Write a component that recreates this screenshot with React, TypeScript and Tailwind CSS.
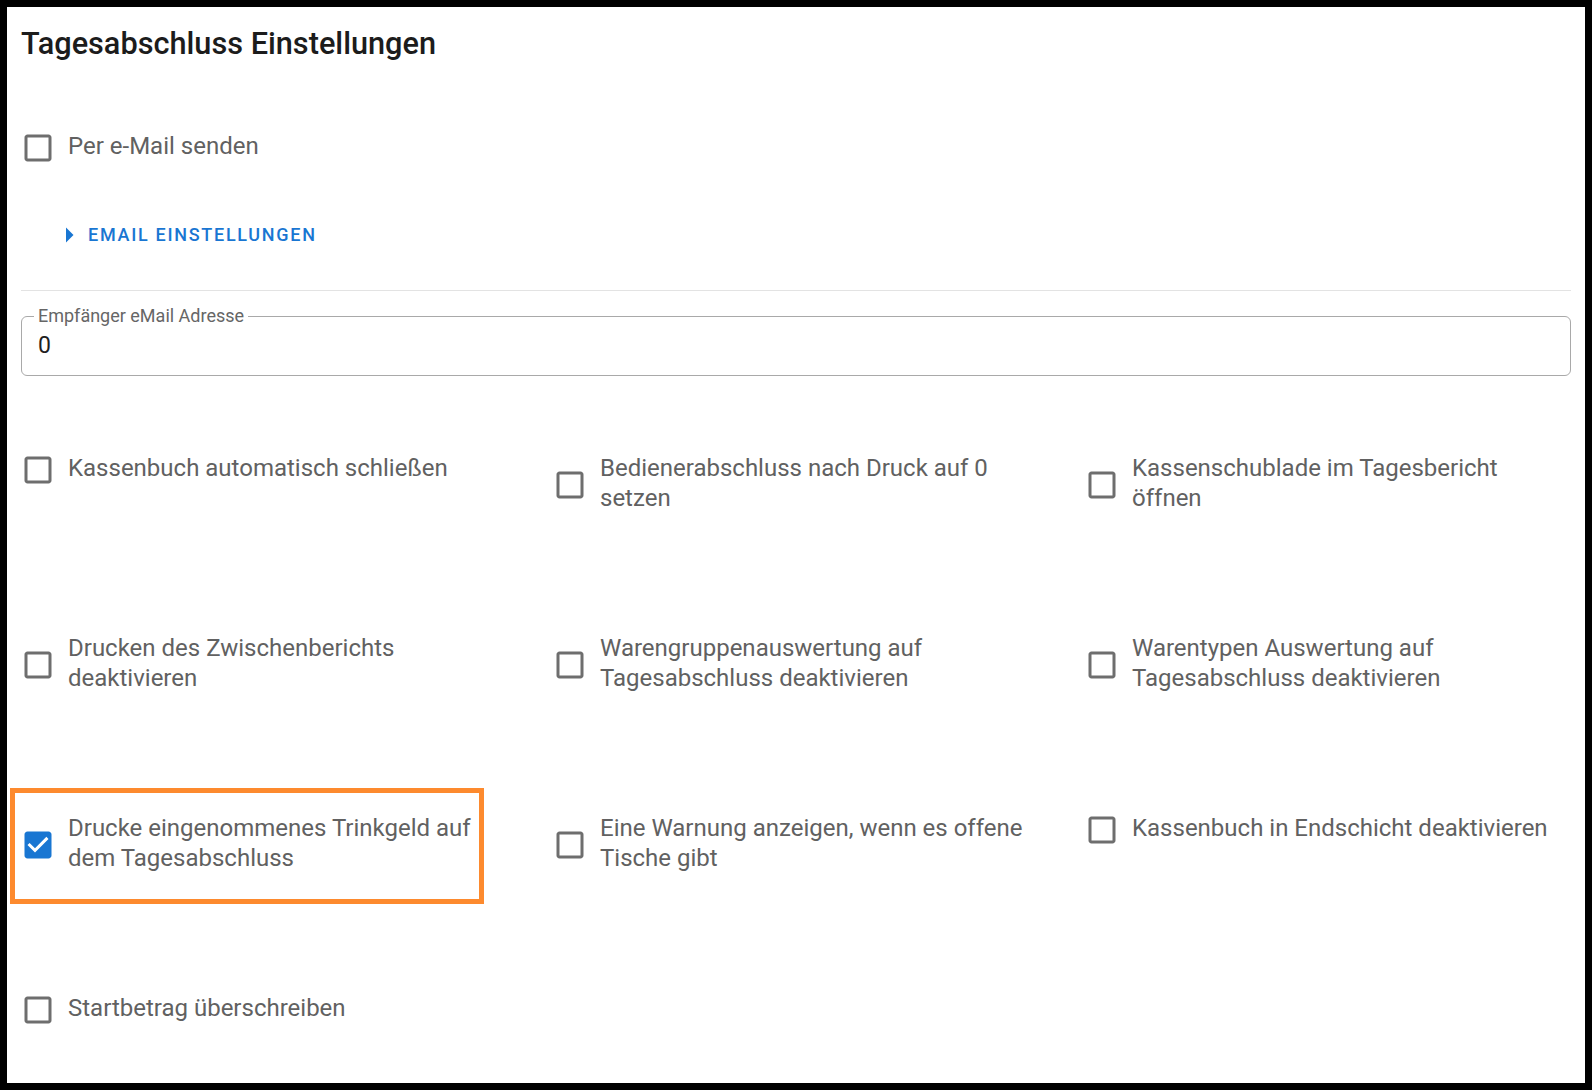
import React from "react";

const labelCls = "text-[24px] leading-[30px] text-[#616161]";

function Box({ checked = false }: { checked?: boolean }) {
  return (
    <svg viewBox="0 0 24 24" className="relative top-[2px] my-[-3px] ml-[-1px] mr-[12px] h-[36px] w-[36px] shrink-0">
      {checked ? (
        <path
          fill="#1976d2"
          d="M19 3H5c-1.11 0-2 .9-2 2v14c0 1.1.89 2 2 2h14c1.11 0 2-.9 2-2V5c0-1.1-.89-2-2-2zm-9 14l-5-5 1.41-1.41L10 14.17l7.59-7.59L19 8l-9 9z"
        />
      ) : (
        <path
          fill="#6e6e6e"
          d="M19 5v14H5V5h14m0-2H5c-1.1 0-2 .9-2 2v14c0 1.1.9 2 2 2h14c1.1 0 2-.9 2-2V5c0-1.1-.9-2-2-2z"
        />
      )}
    </svg>
  );
}

function Option({ label, checked }: { label: string; checked?: boolean }) {
  return (
    <label className="flex items-center">
      <Box checked={checked} />
      <span className={`${labelCls} max-w-[430px]`}>{label}</span>
    </label>
  );
}

export default function App() {
  return (
    <div className="h-screen bg-black p-[7px] font-['Roboto','Noto_Sans',sans-serif]">
      <div className="h-[1076px] overflow-hidden bg-white px-[14px]">
        <h2 className="pt-[19px] text-[30.7px] font-medium leading-[36px] text-[#1c1c1c]">
          Tagesabschluss Einstellungen
        </h2>

        <div className="mt-[69px]">
          <Option label="Per e-Mail senden" />
        </div>

        <button className="ml-[30px] mt-[62px] flex items-center text-[18px] font-medium uppercase leading-[24px] tracking-[0.095em] text-[#1976d2]">
          <svg viewBox="0 0 24 24" className="my-[-6px] mr-[1px] h-[36px] w-[36px]">
            <path fill="#1976d2" d="M10 17l5-5-5-5v10z" />
          </svg>
          Email Einstellungen
        </button>

        <div className="mt-[43px] h-px bg-[#e3e3e3]" />

        <div className="relative mt-[25px] rounded-[6px] border border-[#a9a9a9] px-[16px] pb-[14px] pt-[14px]">
          <span className="absolute left-[12px] top-[-11px] bg-white px-[4px] text-[18px] leading-[20px] text-[#666666]">
            Empfänger eMail Adresse
          </span>
          <div className="text-[23px] leading-[30px] text-[#1f1f1f]">0</div>
        </div>

        <div className="mt-[77px] grid grid-cols-[532px_532px_1fr] grid-rows-[180px_180px_180px_auto] items-start">
          <Option label="Kassenbuch automatisch schließen" />
          <Option label="Bedienerabschluss nach Druck auf 0 setzen" />
          <Option label="Kassenschublade im Tagesbericht öffnen" />

          <Option label="Drucken des Zwischenberichts deaktivieren" />
          <Option label="Warengruppenauswertung auf Tagesabschluss deaktivieren" />
          <Option label="Warentypen Auswertung auf Tagesabschluss deaktivieren" />

          <div className="relative">
            <span className="pointer-events-none absolute left-[-11px] top-[-25px] h-[116px] w-[474px] border-[5px] border-[#fd8a2e]" />
            <Option label="Drucke eingenommenes Trinkgeld auf dem Tagesabschluss" checked />
          </div>
          <Option label="Eine Warnung anzeigen, wenn es offene Tische gibt" />
          <Option label="Kassenbuch in Endschicht deaktivieren" />

          <Option label="Startbetrag überschreiben" />
        </div>
      </div>
    </div>
  );
}
